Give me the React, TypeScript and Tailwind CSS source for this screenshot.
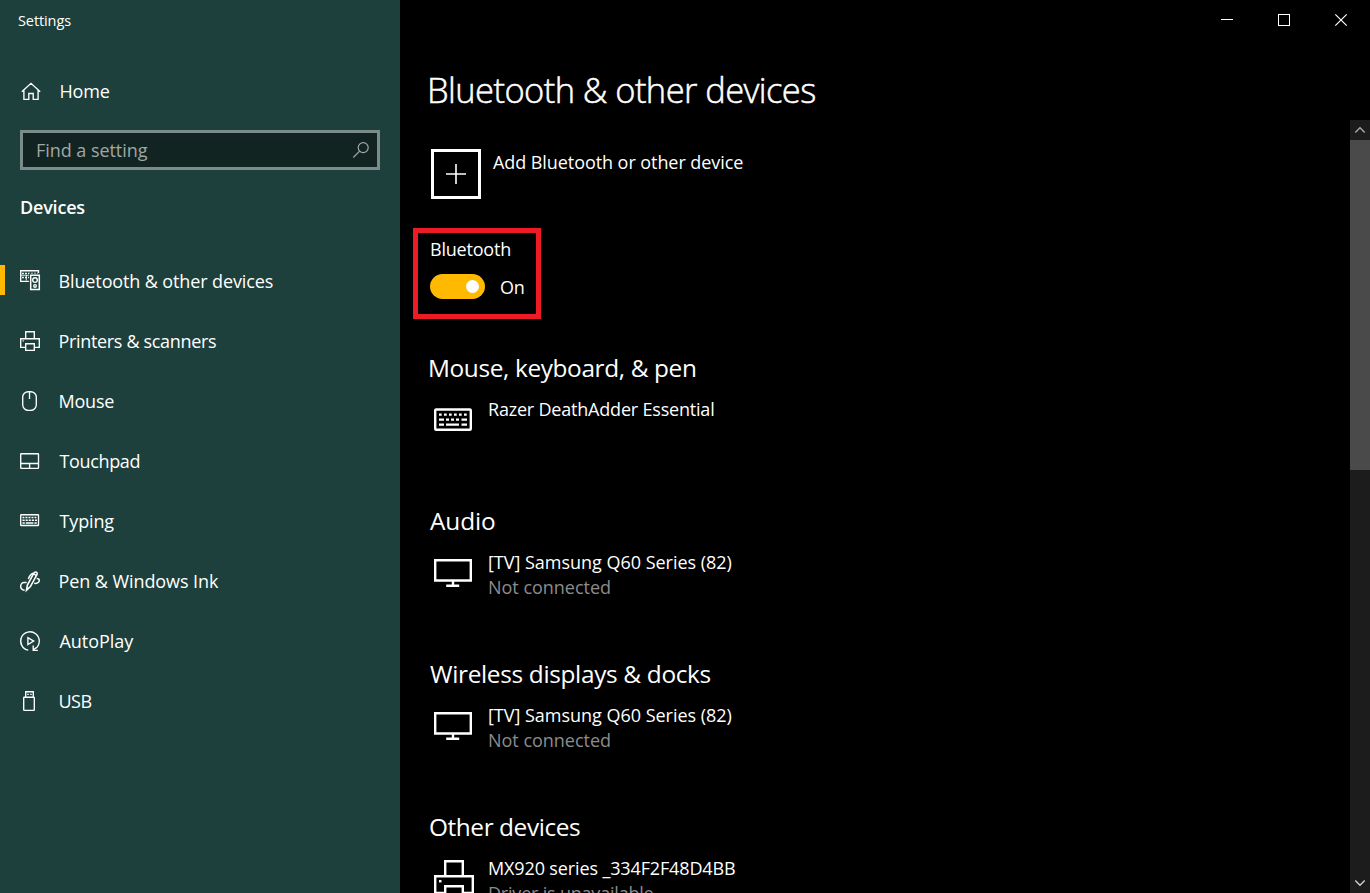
import type { ReactNode } from "react";

type IconProps = { children: ReactNode; size?: number };

function Glyph({ children, size = 20 }: IconProps) {
  return (
    <svg
      width={size}
      height={size}
      viewBox={`0 0 ${size} ${size}`}
      fill="none"
      stroke="currentColor"
      strokeWidth="1.35"
      className="block shrink-0 overflow-visible"
    >
      {children}
    </svg>
  );
}

const HomeIcon = () => (
  <Glyph>
    <path d="M1.8 10.8 11 2.3l9.2 8.5M3.9 9v9.3h4.9v-5.8h4.4v5.8h4.9V9" />
  </Glyph>
);

const DevicesIcon = () => (
  <Glyph>
    <path d="M9.3 10.4H.7V-.3h17.8v2.6" />
    <path d="M2 2.500h16M2 6.500h7" strokeWidth="1.500" strokeDasharray="1.900 1.100" />
    <path d="M1 4.300h8.500" strokeWidth="1" strokeOpacity="0.8" />
    <path d="M6.300 4v5.500" strokeWidth="1.100" strokeOpacity="0.8" />
    <path d="M10.7 4.300h8.600v14.300h-8.600z" stroke="#1e403c" strokeWidth="3.600" />
    <path d="M10.7 4.300h8.600v14.300h-8.600z" strokeWidth="1.500" />
    <circle cx="15" cy="9" r="2.300" />
    <circle cx="15" cy="14.900" r="1.300" />
  </Glyph>
);

const PrinterIcon = () => (
  <Glyph>
    <path d="M5.7 7.3V.7h8.6v6.6M5.3 16.3H.7V7.7h18.6v8.6h-4.6M5.7 12.7h8.6v6.6H5.7z" />
    <path d="M2.6 9.9h1.2" />
  </Glyph>
);

const MouseIcon = () => (
  <Glyph>
    <rect x="2.7" y="0.7" width="13.6" height="18.6" rx="5.6" />
    <path d="M9.5 1.2v6.800" />
  </Glyph>
);

const TouchpadIcon = () => (
  <Glyph>
    <rect x="0.7" y="2.7" width="17.8" height="14.6" rx="0.6" />
    <path d="M1 12.5h17.4M9.6 12.5v4.6" />
  </Glyph>
);

const TypingIcon = () => (
  <Glyph>
    <rect x="0.7" y="3.7" width="17.8" height="10.8" rx="0.6" />
    <path d="M2.500 6.500h14.500" strokeDasharray="1.900 1.100" strokeWidth="1.500" />
    <path d="M2.500 9.200h14.500" strokeDasharray="2.200 0.900" strokeWidth="1.400" />
    <path d="M2.500 12h2.300M5.800 12h7.600M14.400 12h2.400" strokeWidth="1.400" />
  </Glyph>
);

const PenIcon = () => (
  <Glyph>
    <path d="M6.5 19.2l.9-5.2L13.8 2.2c.6-1 1.7-1.5 2.6-.9.9.5 1 1.6.4 2.6L10.4 15.6z" strokeWidth="1.6" />
    <path d="M13.2 2.6l3 1.8M13.2 2.3C10.5 3.2 9.3 5.5 8.3 8M6.6 11.6H4C2 11.6.7 13.4.7 15.3c0 2.3 1.5 3.8 3.9 4" strokeWidth="1.5" />
    <path d="M14.2 12.3c2.3.5 5.1-.7 5.1-2.7 0-1.2-.9-1.9-2.6-2" strokeWidth="1.5" />
  </Glyph>
);

const AutoPlayIcon = () => (
  <Glyph>
    <path d="M8.3 19.2A9.3 9.3 0 1 1 15.8 17.3" />
    <path d="M13.2 14.6v4.7h4.7M13.4 19.1l2.6-2.3" />
    <path d="M7.9 6.6v6.9l5.8-3.45z" />
  </Glyph>
);

const UsbIcon = () => (
  <Glyph>
    <rect x="3.7" y="6.2" width="10.6" height="13.1" rx="0.6" />
    <path d="M5.7 6V.7h7.6V6M7.2 3.4h1.6M10.2 3.4h1.6" />
  </Glyph>
);

const KeyboardLarge = () => (
  <Glyph size={40}>
    <rect x="1.2" y="10.5" width="35.6" height="20.2" rx="1" strokeWidth="2.4" />
    <path
      d="M5 15.6h2.7M10 15.6h2.7M15 15.6h2.7M20 15.6h2.7M25 15.6h2.7M30 15.6h2.7M5 20.6h5M12 20.6h3M17 20.6h3M22 20.6h3M27.5 20.6h5.5M5 25.6h5M12 25.6h13M27.5 25.6h5.5"
      strokeWidth="2.4"
    />
  </Glyph>
);

const TvLarge = () => (
  <Glyph size={40}>
    <path d="M1.2 8.2h35.6v20.3H1.2z" strokeWidth="2.4" />
    <path d="M19 29v5M12.2 33.8h13" strokeWidth="2.4" />
  </Glyph>
);

const PrinterLarge = () => (
  <Glyph size={40}>
    <path d="M11.2 18V3.2h17.6V18M11 35H1.2V18.2h37.6V35H29M11.2 28.2h17.6V41H11.2z" strokeWidth="2.4" />
    <path d="M5 23.2h2.5" strokeWidth="2.5" />
  </Glyph>
);

const nav = [
  { label: "Bluetooth & other devices", icon: <DevicesIcon />, spacing: "pl-[18.5px] tracking-[-0.12px]", active: true },
  { label: "Printers & scanners", icon: <PrinterIcon />, spacing: "pl-[18.5px] tracking-[-0.33px]" },
  { label: "Mouse", icon: <MouseIcon />, spacing: "pl-[18.5px] tracking-[-0.2px]" },
  { label: "Touchpad", icon: <TouchpadIcon />, spacing: "pl-[19.5px] tracking-[-0.36px]" },
  { label: "Typing", icon: <TypingIcon />, spacing: "pl-[19.5px] tracking-[-0.15px]" },
  { label: "Pen & Windows Ink", icon: <PenIcon />, spacing: "pl-[18.5px] tracking-[-0.08px]" },
  { label: "AutoPlay", icon: <AutoPlayIcon />, spacing: "pl-[19.5px] tracking-[-0.05px]" },
  { label: "USB", icon: <UsbIcon />, spacing: "pl-[18.5px] tracking-[-0.5px]" },
];

const sections = [
  {
    title: "Mouse, keyboard, & pen",
    titleSpacing: "-ml-px tracking-[-0.37px]",
    icon: <KeyboardLarge />,
    name: "Razer DeathAdder Essential",
    nameSpacing: "tracking-[-0.2px]",
    status: "",
    statusSpacing: "",
  },
  {
    title: "Audio",
    titleSpacing: "ml-px tracking-[-0.1px]",
    icon: <TvLarge />,
    name: "[TV] Samsung Q60 Series (82)",
    nameSpacing: "tracking-[-0.02px]",
    status: "Not connected",
    statusSpacing: "tracking-[-0.02px]",
  },
  {
    title: "Wireless displays & docks",
    titleSpacing: "ml-px tracking-[-0.33px]",
    icon: <TvLarge />,
    name: "[TV] Samsung Q60 Series (82)",
    nameSpacing: "tracking-[-0.02px]",
    status: "Not connected",
    statusSpacing: "tracking-[-0.02px]",
  },
  {
    title: "Other devices",
    titleSpacing: "tracking-[-0.42px]",
    icon: <PrinterLarge />,
    name: "MX920 series _334F2F48D4BB",
    nameSpacing: "tracking-[-0.13px]",
    status: "Driver is unavailable",
    statusSpacing: "tracking-[-0.2px]",
  },
];

function Sidebar() {
  return (
    <aside className="flex w-[400px] shrink-0 flex-col bg-[#1e403c]">
      <div className="flex h-[41px] items-center pl-[18px] text-[14.5px] tracking-[-0.1px]">Settings</div>
      <div className="mt-5 flex h-[60px] items-center pl-5">
        <HomeIcon />
        <span className="pl-[19.5px]">Home</span>
      </div>
      <div className="mx-5 mt-[9px] flex h-10 items-center justify-between border-[3px] border-[#7a8c89] bg-[#122422] pr-2 pl-[13px] tracking-[-0.05px] text-[#a0a7a6]">
        <span>Find a setting</span>
        <Glyph size={16}>
          <circle cx="10.2" cy="5.6" r="5" strokeWidth="1.2" />
          <path d="M6.6 9.2.3 15.5" strokeWidth="1.2" />
        </Glyph>
      </div>
      <h2 className="mt-[22px] flex h-[30px] items-center pl-5 font-semibold">Devices</h2>
      <nav className="mt-[29px] flex flex-col">
        {nav.map((n) => (
          <div key={n.label} className="flex h-[60px] items-center">
            <span className={n.active ? "mb-0.5 h-[30px] w-[5px] bg-[#ffb900]" : "h-[30px] w-[5px]"} />
            <span className="pl-[15px]">{n.icon}</span>
            <span className={n.spacing}>{n.label}</span>
          </div>
        ))}
      </nav>
    </aside>
  );
}

function TitleButtons() {
  return (
    <div className="flex h-10 shrink-0 justify-end">
      <svg width="171" height="40" viewBox="0 0 171 40" fill="none" stroke="#fff" shapeRendering="crispEdges">
        <path d="M22 19.5h12" />
        <path d="M79.5 14.5h11v11h-11z" />
        <path d="M136.3 14.3l11.4 11.4M147.7 14.3l-11.4 11.4" shapeRendering="auto" strokeWidth="1.2" />
      </svg>
    </div>
  );
}

function Scrollbar() {
  return (
    <div className="flex w-5 shrink-0 flex-col bg-[#1c1c1c]">
      <svg width="20" height="20" viewBox="0 0 20 20" fill="none" stroke="#a8a8a8" strokeWidth="1.4">
        <path d="M5.3 12.5 10 7.8l4.7 4.7" />
      </svg>
      <div className="h-[330px] bg-[#4a4a4a]" />
      <svg width="20" height="20" viewBox="0 0 20 20" fill="none" stroke="#d0d0d0" strokeWidth="1.4" className="mt-auto">
        <path d="M5.3 7.5 10 12.2l4.7-4.7" />
      </svg>
    </div>
  );
}

export default function App() {
  return (
    <div className="flex h-[893px] w-[1370px] overflow-hidden bg-black font-['Open_Sans',sans-serif] text-[18px] leading-[25px] tracking-[-0.2px] whitespace-nowrap text-white">
      <Sidebar />
      <main className="flex min-w-0 flex-1 flex-col">
        <TitleButtons />
        <h1 className="flex h-20 shrink-0 items-center pt-[19px] pl-[27px] text-[34.5px] leading-[60px] font-light tracking-[-0.58px] [-webkit-text-stroke:0.5px_white]">
          Bluetooth &amp; other devices
        </h1>
        <div className="flex min-h-0 flex-1">
          <div className="flex min-w-0 flex-1 flex-col overflow-hidden">
            <div className="mt-[29px] ml-[31px] flex h-[50px] shrink-0">
              <div className="flex size-[50px] items-center justify-center border-[3px] border-white">
                <svg width="20" height="20" viewBox="0 0 20 20" stroke="#fff" strokeWidth="1.6">
                  <path d="M10 0v20M0 10h20" />
                </svg>
              </div>
              <span className="pt-px pl-3 tracking-[-0.07px]">Add Bluetooth or other device</span>
            </div>
            <div className="mt-[29px] ml-[13px] flex h-[91px] w-32 shrink-0 flex-col border-[5px] border-[#ed1c24] pt-1 pl-3">
              <span>Bluetooth</span>
              <div className="mt-3 flex h-[25px] items-center gap-[15px]">
                <div className="flex h-[25px] w-[55px] items-center justify-end rounded-full bg-[#ffb900] pr-1.5">
                  <div className="size-[13px] rounded-full bg-white" />
                </div>
                <span className="pt-0.5">On</span>
              </div>
            </div>
            <div className="mt-[26px] flex flex-col">
              {sections.map((s) => (
                <section key={s.title} className="h-[153px] shrink-0 pl-[29px]">
                  <h2 className={`flex h-[46px] items-center text-[24.4px] leading-[46px] ${s.titleSpacing}`}>{s.title}</h2>
                  <div className="flex pt-[6px]">
                    <div className="h-[50px] w-[59px] pt-[2px] pl-[5px]">{s.icon}</div>
                    <div className="flex flex-col">
                      <span className={s.nameSpacing}>{s.name}</span>
                      <span className={`text-[#8c8c8c] ${s.statusSpacing}`}>{s.status}</span>
                    </div>
                  </div>
                </section>
              ))}
            </div>
          </div>
          <Scrollbar />
        </div>
      </main>
    </div>
  );
}
